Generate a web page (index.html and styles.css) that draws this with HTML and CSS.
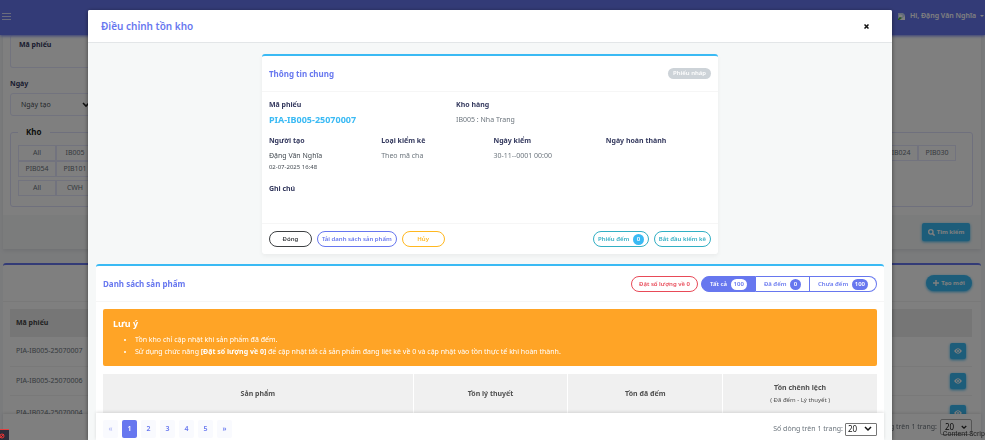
FILE: index.html
```html
<!DOCTYPE html>
<html lang="vi">
<head>
<meta charset="utf-8">
<title>Điều chỉnh tồn kho</title>
<link rel="stylesheet" href="styles.css">
</head>
<body>
<div class="page">
  <header class="navbar">
    <button class="menu" type="button" aria-label="Menu"><span></span><span></span><span></span></button>
    <a class="user" href="#">
      <svg width="9" height="9" viewBox="0 0 9 9" aria-hidden="true"><path fill="#c4d6f5" d="M1 1h5l2 2v5H1z"/><path fill="#fff" d="M2 4a1 1 0 0 1 2-1 1 1 0 0 1 1 2H2z"/><path fill="#4fae3c" d="M1 8V7l2-2 2 1-3 2z"/><path fill="#fff" d="M3 8l5-4v4z"/></svg>
      Hi, Đặng Văn Nghĩa <span class="caret"></span>
    </a>
  </header>
  <section class="filter">
    <div class="filter-body">
      <div class="search-box"><label for="code">Mã phiếu</label><input id="code" type="text"></div>
      <label class="date-label" for="date">Ngày</label>
      <div class="date-select"><select id="date"><option>Ngày tạo</option></select><svg width="8" height="6" viewBox="0 0 8 6" aria-hidden="true"><path d="M1 1l3 3 3-3" fill="none" stroke="#222" stroke-width="1.6"/></svg></div>
      <fieldset class="stores">
        <legend>Kho</legend>
        <div class="store-row"><button type="button">All</button><button type="button">IB005</button><span class="fill"></span><button type="button">PIB024</button><button type="button">PIB030</button></div>
        <div class="store-row"><button type="button">PIB054</button><button type="button">PIB101</button></div>
        <div class="store-row second"><button type="button">All</button><button type="button">CWH</button></div>
      </fieldset>
    </div>
    <div class="filter-foot">
      <button class="search-btn" type="button"><svg width="7" height="7" viewBox="0 0 16 16" aria-hidden="true"><circle cx="6.5" cy="6.5" r="5" fill="none" stroke="#fff" stroke-width="3"/><path d="M10 10l5 5" stroke="#fff" stroke-width="3.4"/></svg>Tìm kiếm</button>
    </div>
  </section>
  <section class="list">
    <div class="list-head"><button class="create-btn" type="button"><svg width="6" height="6" viewBox="0 0 6 6" aria-hidden="true"><path d="M3 0v6M0 3h6" stroke="#fff" stroke-width="1.4"/></svg>Tạo mới</button></div>
    <table class="vouchers">
      <thead><tr><th>Mã phiếu</th><th></th></tr></thead>
      <tbody>
        <tr><td>PIA-IB005-25070007</td><td><button type="button" aria-label="Xem"><svg width="8" height="6" viewBox="0 0 16 12" aria-hidden="true"><path fill="#fff" d="M0 6Q8-5 16 6 8 17 0 6z"/><circle cx="8" cy="6" r="3" fill="none" stroke="#3abaf4" stroke-width="1.6"/></svg></button></td></tr>
        <tr><td>PIA-IB005-25070006</td><td><button type="button" aria-label="Xem"><svg width="8" height="6" viewBox="0 0 16 12" aria-hidden="true"><path fill="#fff" d="M0 6Q8-5 16 6 8 17 0 6z"/><circle cx="8" cy="6" r="3" fill="none" stroke="#3abaf4" stroke-width="1.6"/></svg></button></td></tr>
        <tr class="last"><td>PIA-IB024-25070004</td><td><button type="button" aria-label="Xem"><svg width="8" height="6" viewBox="0 0 16 12" aria-hidden="true"><path fill="#fff" d="M0 6Q8-5 16 6 8 17 0 6z"/><circle cx="8" cy="6" r="3" fill="none" stroke="#3abaf4" stroke-width="1.6"/></svg></button></td></tr>
      </tbody>
    </table>
    <div class="list-foot"><label for="rows-bg">Số dòng trên 1 trang:</label><span class="rows-select tall"><select id="rows-bg"><option>20</option></select><svg width="6" height="5" viewBox="0 0 8 6" aria-hidden="true"><path d="M1 1l3 3 3-3" fill="none" stroke="#222" stroke-width="1.6"/></svg></span></div>
  </section>
</div>

<div class="backdrop">
  <div class="modal" role="dialog" aria-labelledby="title">
    <header class="modal-head"><h1 id="title">Điều chỉnh tồn kho</h1><button type="button" aria-label="Đóng"><svg width="5" height="5" viewBox="0 0 5 5" aria-hidden="true"><path d="M.5.5l4 4m0-4l-4 4" stroke="#111" stroke-width="1.5"/></svg></button></header>
    <div class="modal-body">
      <section class="info">
        <div class="info-head"><h2>Thông tin chung</h2><span class="status">Phiếu nháp</span></div>
        <div class="info-body">
          <dl class="code-col"><dt>Mã phiếu</dt><dd class="code">PIA-IB005-25070007</dd></dl>
          <dl class="store-col"><dt>Kho hàng</dt><dd>IB005 : Nha Trang</dd></dl>
          <dl><dt>Người tạo</dt><dd class="person">Đặng Văn Nghĩa</dd><dd class="time">02-07-2025 16:48</dd></dl>
          <dl><dt>Loại kiểm kê</dt><dd>Theo mã cha</dd></dl>
          <dl><dt>Ngày kiểm</dt><dd>30-11--0001 00:00</dd></dl>
          <dl><dt>Ngày hoàn thành</dt><dd></dd></dl>
          <dl class="note"><dt>Ghi chú</dt><dd></dd></dl>
        </div>
        <div class="info-foot">
          <button class="pill dark" type="button">Đóng</button>
          <button class="pill primary" type="button">Tải danh sách sản phẩm</button>
          <button class="pill warn" type="button">Hủy</button>
          <span class="fill"></span>
          <button class="pill teal" type="button">Phiếu đếm <b class="count sky">0</b></button>
          <button class="pill teal" type="button">Bắt đầu kiểm kê</button>
        </div>
      </section>
      <section class="products">
        <div class="products-head">
          <h2>Danh sách sản phẩm</h2>
          <button class="pill red" type="button">Đặt số lượng về 0</button>
          <div class="tabs">
            <button class="on" type="button">Tất cả <b class="count">100</b></button>
            <button type="button">Đã đếm <b class="count">0</b></button>
            <button type="button">Chưa đếm <b class="count">100</b></button>
          </div>
        </div>
        <div class="products-body">
          <div class="alert">
            <h3>Lưu ý</h3>
            <ul>
              <li>Tồn kho chỉ cập nhật khi sản phẩm đã đếm.</li>
              <li>Sử dụng chức năng <b>[Đặt số lượng về 0]</b> để cập nhật tất cả sản phẩm đang liệt kê về 0 và cập nhật vào tồn thực tế khi hoàn thành.</li>
            </ul>
          </div>
          <table class="stock">
            <thead><tr><th class="wide">Sản phẩm</th><th>Tồn lý thuyết</th><th>Tồn đã đếm</th><th>Tồn chênh lệch<small>( Đã đếm - Lý thuyết )</small></th></tr></thead>
          </table>
        </div>
        <footer class="products-foot">
          <nav class="pager"><a class="off" href="#">«</a><a class="on" href="#">1</a><a href="#">2</a><a href="#">3</a><a href="#">4</a><a href="#">5</a><a href="#">»</a></nav>
          <div class="rows"><label for="rows">Số dòng trên 1 trang:</label><span class="rows-select"><select id="rows"><option>20</option></select><svg width="8" height="6" viewBox="0 0 8 6" aria-hidden="true"><path d="M1 1l3 3 3-3" fill="none" stroke="#111" stroke-width="1.5"/></svg></span></div>
        </footer>
      </section>
    </div>
  </div>
</div>
<div class="debug"><svg width="6" height="6" viewBox="0 0 6 6" aria-hidden="true"><circle cx="2" cy="3" r="2" fill="none" stroke="#e33" /><path d="M0 5l4-4" stroke="#e33"/></svg></div>
<span class="hint">Content Scrip</span>
</body>
</html>
```
FILE: styles.css
```css
* { box-sizing: border-box; }
body { margin: 0; height: 100vh; overflow: hidden; position: relative; background: #f4f6f9; color: #6c757d; font: 7px/12px "Noto Sans", "Open Sans", sans-serif; }
button, input, select { font: inherit; color: inherit; margin: 0; padding: 0; border: 0; background: none; }
select { appearance: none; }
h1, h2, h3, dl, dd, ul { margin: 0; padding: 0; }
a { text-decoration: none; color: inherit; }
.fill { flex: 1; }

.page { height: 100vh; overflow: hidden; display: flex; flex-direction: column; }
.navbar { flex: none; height: 35px; display: flex; align-items: center; justify-content: space-between; padding: 0 1px 3px 2px; background: #6777ef; box-shadow: 0 1px 3px #6777ef; z-index: 1; }
.menu { display: grid; gap: 2px; width: 9px; }
.menu span { height: 1px; background: #d4d8fa; }
.user { display: flex; align-items: center; gap: 4px; color: #fff; font-weight: 600; }
.caret { border: 2px solid transparent; border-top-color: #fff; border-bottom: 0; }

.filter { flex: none; margin: 0 4px 0 3px; background: #fff; box-shadow: 0 2px 4px rgba(0,0,0,.08); }
.filter-body { padding: 0 8px 8px 7px; display: flex; flex-direction: column; }
.search-box { height: 33px; padding: 4px 8px; border: 1px solid #e4e6fc; border-top: 0; border-radius: 3px; width: 120px; display: flex; flex-direction: column; }
.search-box label, .date-label { color: #34395e; font-weight: 700; }
.search-box input { width: 100%; height: 12px; }
.date-label { margin-top: 10px; }
.date-select { width: 81px; height: 23px; margin-top: 3px; padding-left: 10px; border: 1px solid #e4e6fc; border-radius: 3px; display: flex; align-items: center; }
.date-select select { flex: 1; min-width: 0; color: #495057; }
.stores { margin: 9px 0 0; padding: 6px 16px 10px 7px; border: 1px solid #dfe1fb; border-radius: 3px; }
.stores legend { padding: 0 8px; margin-left: 0; color: #191d21; font-size: 8px; font-weight: 700; line-height: 14px; }
.store-row { display: flex; height: 16px; }
.store-row.second { margin-top: 3px; }
.store-row button { width: 38px; height: 16px; border: 1px solid #e4e6fc; }
.filter-foot { height: 34px; padding: 0 11px; background: #f6f8f8; display: flex; justify-content: flex-end; align-items: center; }
.search-btn { width: 48px; height: 18px; border-radius: 2px; background: #3abaf4; color: #fff; font-size: 6px; font-weight: 700; display: flex; align-items: center; justify-content: center; gap: 2px; box-shadow: 0 1px 3px #3abaf4; }

.list { flex: 1; margin: 14px 4px 0 3px; border-top: 2px solid #6777ef; border-radius: 3px; background: #fff; display: flex; flex-direction: column; }
.list-head { height: 37px; padding-right: 9px; border-bottom: 1px solid #f3f3f3; display: flex; justify-content: flex-end; align-items: center; }
.create-btn { width: 46px; height: 16px; border-radius: 8px; background: #3abaf4; color: #fff; font-size: 6px; font-weight: 700; display: flex; align-items: center; justify-content: center; gap: 2px; box-shadow: 0 1px 3px #3abaf4; }
.vouchers { margin: 7px 9px 0 7px; border-collapse: collapse; }
.vouchers th { height: 28px; background: #ededed; color: #444; padding: 0 6px; text-align: left; }
.vouchers td { height: 29px; padding: 0 6px; border-bottom: 1px solid #f3f3f3; }
.vouchers td:last-child { width: 27px; padding: 0 5px; }
.vouchers td button { width: 16px; height: 16px; display: grid; place-items: center; background: #3abaf4; border-radius: 2px; box-shadow: 0 1px 3px #3abaf4; }
.vouchers .last td { padding-top: 6px; }
.list-foot { position: fixed; left: 3px; right: 4px; bottom: 0; height: 26px; padding: 0 9px; display: flex; justify-content: flex-end; align-items: center; gap: 3px; background: #fff; box-shadow: 0 -1px 3px rgba(0,0,0,.12); }

.backdrop { position: fixed; inset: 0; padding: 10px 93px 0 88px; background: rgba(0,0,0,.5); z-index: 2; }
.modal { height: 100%; display: flex; flex-direction: column; overflow: hidden; background: #f6f8f8; border-radius: 2px 2px 0 0; box-shadow: 0 1px 4px rgba(0,0,0,.5); }
.modal-head { flex: none; height: 33px; padding: 0 23px 0 13px; display: flex; align-items: center; justify-content: space-between; background: #fff; border-bottom: 1px solid #e3e6e8; }
.modal-head h1 { color: #6777ef; font-size: 10px; line-height: 16px; font-weight: 600; }
.modal-head button { display: grid; }
.modal-body { flex: 1; min-height: 0; padding: 11px 8px 0; display: flex; flex-direction: column; }
h2 { color: #6777ef; font-size: 8px; line-height: 12px; font-weight: 700; }

.info { flex: none; margin: 0 calc(100% * 4 / 19); background: #fff; border-top: 2px solid #3abaf4; border-radius: 3px; box-shadow: 0 2px 4px rgba(0,0,0,.05); }
.info-head { height: 36px; padding: 0 7px; display: flex; align-items: center; justify-content: space-between; border-bottom: 1px solid #f6f6f6; }
.status { padding: 0 5px; line-height: 11px; border-radius: 6px; background: #cdd3d8; color: #fff; font-size: 6px; font-weight: 600; }
.info-body { padding: 7px 0 0 7px; display: grid; grid-template-columns: repeat(12, 1fr); border-bottom: 1px solid #f6f6f6; }
.info-body dl { grid-column: span 3; height: 48px; }
.info-body .code-col { grid-column: span 5; height: 36px; }
.info-body .store-col { grid-column: span 7; height: 36px; }
dt { color: #34395e; font-weight: 700; line-height: 12px; }
dd { line-height: 12px; padding-top: 3px; }
.code { color: #3abaf4; font-size: 9px; font-weight: 700; }
.person { color: #444b52; }
.time { padding: 0; font-size: 6px; line-height: 10px; color: #444b52; }
.info-body .note { grid-column: 1 / -1; height: 40px; }
.info-foot { height: 30px; padding: 0 7px; display: flex; align-items: center; gap: 5px; }
.pill { height: 16px; padding: 0 4px; border: 1px solid currentColor; border-radius: 8px; font-size: 6px; line-height: 12px; font-weight: 600; white-space: nowrap; }
.dark { min-width: 43px; color: #3d4043; }
.primary { color: #6777ef; }
.warn { min-width: 43px; color: #ffb820; }
.teal { color: #32afc4; }
.red { color: #e84a58; padding: 0 7px; }
.count { display: inline-block; min-width: 11px; margin-left: 2px; padding: 0 3px; border-radius: 6px; background: #6777ef; color: #fff; font-size: 6px; line-height: 11px; font-weight: 600; text-align: center; }
.sky { background: #3abaf4; }

.products { flex: 1; min-height: 0; margin-top: 10px; display: flex; flex-direction: column; background: #fff; border-top: 2px solid #3abaf4; border-radius: 3px 3px 0 0; }
.products-head { flex: none; height: 36px; padding: 0 7px; display: flex; align-items: center; gap: 3px; border-bottom: 1px solid #f6f6f6; }
.products-head h2 { flex: 1; }
.tabs { display: flex; height: 16px; color: #6777ef; }
.tabs button { padding: 0 8px; border: 1px solid #6777ef; font-size: 6px; font-weight: 600; line-height: 12px; white-space: nowrap; }
.tabs button + button { border-left: 0; }
.tabs button:first-child { border-radius: 8px 0 0 8px; }
.tabs button:last-child { border-radius: 0 8px 8px 0; }
.tabs .on { background: #6777ef; color: #fff; }
.tabs .on .count { background: #fff; color: #6777ef; }
.products-body { flex: 1; min-height: 0; padding: 7px 7px 0; overflow: hidden; }
.alert { height: 57px; padding: 8px 10px; border-radius: 2px; background: #ffa426; color: #fff; }
.alert h3 { font-size: 9px; line-height: 14px; }
.alert ul { padding: 3px 0 0 22px; line-height: 12px; }
.stock { width: 100%; margin-top: 8px; table-layout: fixed; border-collapse: separate; border-spacing: 0; }
.stock th { height: 40px; padding: 0; background: #f0f0f0; color: #505050; text-align: center; line-height: 12px; }
.stock th + th { border-left: 1px solid #fff; }
.stock .wide { width: 40%; }
.stock small { display: block; font-size: 6px; font-weight: 400; line-height: 12px; }
.products-foot { flex: none; height: 27px; padding: 7px 7px 0; display: flex; justify-content: space-between; background: #fff; box-shadow: 0 -1px 3px rgba(0,0,0,.12); }
.pager { display: flex; gap: 4px; }
.pager a { width: 15px; height: 18px; border-radius: 2px; background: #f9fafe; color: #6777ef; font-weight: 600; line-height: 18px; text-align: center; }
.pager .off { color: #b3bbf7; }
.pager .on { background: #6777ef; color: #fff; }
.rows { display: flex; align-items: center; gap: 2px; height: 18px; }
.rows-select { display: flex; align-items: center; width: 32px; height: 13px; padding: 0 4px 0 2px; border: 1px solid #767676; border-radius: 1px; }
.rows-select select { flex: 1; min-width: 0; color: #111; font-size: 8px; }
.tall { height: 16px; padding-left: 4px; border-color: #aaa; border-radius: 2px; }

.debug { position: fixed; left: 0; bottom: 0; z-index: 3; width: 9px; height: 11px; padding: 3px 0 0; line-height: 6px; background: #2b2d3b; border-top: 1px solid #e34040; }
.hint { position: fixed; right: 0; bottom: 0; z-index: 3; white-space: nowrap; color: #1e1e1e; font: 7px/12px Roboto, sans-serif; }
```
